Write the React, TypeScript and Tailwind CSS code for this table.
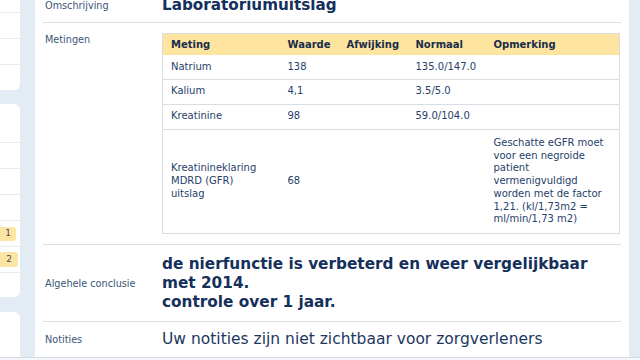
import React from "react";

const font = { fontFamily: '"DejaVu Sans", Verdana, sans-serif' };

function SideRow({ h, children }: { h: string; children?: React.ReactNode }) {
  return <div className={`${h} flex items-center`}>{children}</div>;
}

function Sidebar() {
  return (
    <div className="flex w-[20px] shrink-0 flex-col">
      {/* card 1 */}
      <div className="flex flex-col divide-y divide-[#e6eaef] rounded-br-[6px] bg-white">
        <SideRow h="h-[13px]" />
        <SideRow h="h-[26px]" />
        <SideRow h="h-[26px]" />
        <SideRow h="h-[25px]" />
      </div>
      {/* card 2 */}
      <div className="mt-[14px] flex flex-col divide-y divide-[#e6eaef] rounded-r-[6px] bg-white">
        <SideRow h="h-[39px]" />
        <SideRow h="h-[26px]" />
        <SideRow h="h-[26px]" />
        <SideRow h="h-[26px]" />
        <SideRow h="h-[26px]">
          <span className="flex h-[14px] w-[16px] items-center justify-end rounded-r-[3px] bg-[#fde6a3] pr-[5px] text-[9px] text-[#4b4f57]">
            1
          </span>
        </SideRow>
        <SideRow h="h-[26px]">
          <span className="flex h-[15px] w-[18px] items-center justify-end rounded-r-[3px] bg-[#fde6a3] pr-[6px] text-[9px] text-[#4b4f57]">
            2
          </span>
        </SideRow>
        <SideRow h="h-[24px]" />
      </div>
      {/* card 3 */}
      <div className="mt-[15px] h-[60px] rounded-tr-[6px] bg-white" />
    </div>
  );
}

const metingen = [
  { naam: "Natrium", waarde: "138", normaal: "135.0/147.0" },
  { naam: "Kalium", waarde: "4,1", normaal: "3.5/5.0" },
  { naam: "Kreatinine", waarde: "98", normaal: "59.0/104.0" },
];

function Metingen() {
  return (
    <table className="w-[457px] table-fixed border-collapse border border-[#d8dde4] text-[10px] leading-[12.7px] text-[#26416a]">
      <colgroup>
        <col className="w-[117px]" />
        <col className="w-[59px]" />
        <col className="w-[69px]" />
        <col className="w-[78px]" />
        <col className="w-[134px]" />
      </colgroup>
      <thead>
        <tr className="bg-[#fde59f] text-left font-bold text-[#1a2d4b]">
          <th className="px-2 py-[4px] leading-[13px]">Meting</th>
          <th className="px-2 py-[4px] leading-[13px]">Waarde</th>
          <th className="px-2 py-[4px] leading-[13px]">Afwijking</th>
          <th className="px-2 py-[4px] leading-[13px]">Normaal</th>
          <th className="px-2 py-[4px] leading-[13px]">Opmerking</th>
        </tr>
      </thead>
      <tbody>
        {metingen.map((m) => (
          <tr key={m.naam} className="border-b border-[#d8dde4]">
            <td className="px-2 py-[5.6px]">{m.naam}</td>
            <td className="px-2 py-[5.6px]">{m.waarde}</td>
            <td className="px-2 py-[5.6px]"></td>
            <td className="px-2 py-[5.6px]">{m.normaal}</td>
            <td className="px-2 py-[5.6px]"></td>
          </tr>
        ))}
        <tr>
          <td className="px-2 py-[7.4px] align-middle">
            Kreatinineklaring
            <br />
            MDRD (GFR)
            <br />
            uitslag
          </td>
          <td className="px-2 py-[7.4px] align-middle">68</td>
          <td className="px-2 py-[7.4px]"></td>
          <td className="px-2 py-[7.4px]"></td>
          <td className="px-2 py-[7.4px]">
            Geschatte eGFR moet
            <br />
            voor een negroide
            <br />
            patient
            <br />
            vermenigvuldigd
            <br />
            worden met de factor
            <br />
            1,21. (kl/1,73m2 =
            <br />
            ml/min/1,73 m2)
          </td>
        </tr>
      </tbody>
    </table>
  );
}

function Label({ children }: { children: React.ReactNode }) {
  return (
    <div className="w-[119px] shrink-0 pl-[2px] text-[9.7px] leading-[13px] text-[#3b5476]">
      {children}
    </div>
  );
}

export default function App() {
  return (
    <div
      className="flex h-[360px] w-[640px] flex-col overflow-hidden bg-[#e3ebf5]"
      style={font}
    >
      <div className="flex h-[357px] overflow-hidden">
        <Sidebar />
        <main className="ml-[15px] w-[594px] shrink-0 bg-white px-[8px]">
          <div className="-mt-[12px] flex flex-col">
            <div className="flex h-[35px] items-center border-b border-[#dadfe5]">
              <Label>Omschrijving</Label>
              <h1 className="text-[15.2px] font-bold text-[#15305b]">
                Laboratoriumuitslag
              </h1>
            </div>

            <div className="flex items-start border-b border-[#dadfe5] pt-[10px] pb-[10px]">
              <Label>Metingen</Label>
              <div className="flex-1 pr-[2px]">
                <Metingen />
              </div>
            </div>

            <div className="flex h-[77px] items-center border-b border-[#dadfe5]">
              <Label>Algehele conclusie</Label>
              <p className="text-[15.3px] leading-[19px] font-bold text-[#15305b]">
                de nierfunctie is verbeterd en weer vergelijkbaar
                <br />
                met 2014.
                <br />
                controle over 1 jaar.
              </p>
            </div>

            <div className="flex h-[35px] items-center">
              <Label>Notities</Label>
              <p className="text-[15.5px] text-[#1d3760]">
                Uw notities zijn niet zichtbaar voor zorgverleners
              </p>
            </div>
          </div>
        </main>
      </div>
      <div className="flex-1 border-t border-[#d6dbe2] bg-[#f4f6f9]" />
    </div>
  );
}
